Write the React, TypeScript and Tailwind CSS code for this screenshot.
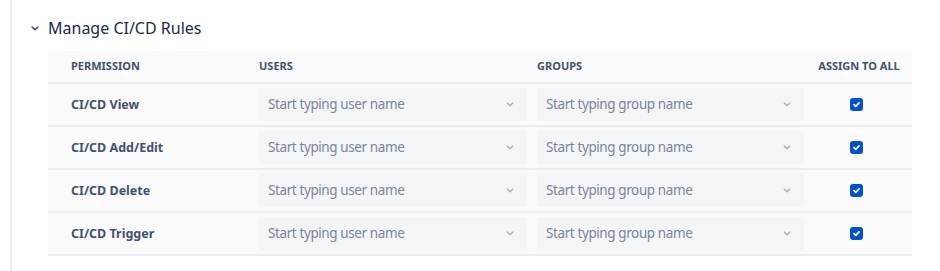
import React from 'react';

const rows = ['CI/CD View', 'CI/CD Add/Edit', 'CI/CD Delete', 'CI/CD Trigger'];

const Chevron: React.FC<{ className?: string; width?: string }> = ({ className, width = '1.6' }) => (
  <svg viewBox="0 0 10 6" className={className} fill="none" stroke="currentColor" strokeWidth={width} strokeLinecap="round" strokeLinejoin="round">
    <path d="M1.5 1.2 5 4.6 8.5 1.2" />
  </svg>
);

const Select: React.FC<{ placeholder: string }> = ({ placeholder }) => (
  <div className="h-[33px] w-full rounded-[3px] bg-[#f4f5f7] flex items-center pl-[9px] pr-[13px]">
    <span className="flex-1 text-[13.5px] tracking-[-0.4px] text-[#7a869a]">{placeholder}</span>
    <Chevron className="w-[8px] h-[5px] text-[#a5adba]" />
  </div>
);

const Check: React.FC = () => (
  <div className="w-[13px] h-[13px] rounded-[3px] bg-[#0052cc] flex items-center justify-center">
    <svg viewBox="0 0 10 10" className="w-[9px] h-[9px]" fill="none" stroke="white" strokeWidth="2" strokeLinecap="round" strokeLinejoin="round">
      <path d="M2.3 5.2 4.2 7 7.8 3.2" />
    </svg>
  </div>
);

export default function App() {
  return (
    <div className="w-[940px] h-[271px] bg-white overflow-hidden font-['Noto_Sans',sans-serif]">
      <div className="ml-[10px] h-full border-l-[2px] border-[#ededed] pl-[19px] pt-[15px]">
        <div className="flex items-center h-[26px]">
          <Chevron className="w-[8px] h-[5px] text-[#42526e] mr-[9px]" width="2" />
          <h2 className="text-[16px] text-[#172b4d] leading-none">Manage CI/CD Rules</h2>
        </div>
        <div className="ml-[17px] mt-[10px] w-[864px] bg-[#fafafa]">
          <div className="grid grid-cols-[203px_278px_277px_106px] h-[33px] border-b-[2px] border-[#ebecf0] items-center text-[11px] font-bold text-[#42526e]">
            <div className="pl-[23px]">PERMISSION</div>
            <div className="pl-[8px]">USERS</div>
            <div className="pl-[8px]">GROUPS</div>
            <div className="text-center">ASSIGN TO ALL</div>
          </div>
          {rows.map((r) => (
            <div key={r} className="grid grid-cols-[203px_278px_277px_106px] h-[43px] border-b-[2px] border-[#ebecf0] items-center">
              <div className="pl-[23px] pt-[1px] text-[12.5px] font-bold text-[#42526e]">{r}</div>
              <div className="pl-[8px] pr-[2px]"><Select placeholder="Start typing user name" /></div>
              <div className="pl-[8px] pr-[2px]"><Select placeholder="Start typing group name" /></div>
              <div className="flex justify-center pr-[5px]"><Check /></div>
            </div>
          ))}
        </div>
      </div>
    </div>
  );
}
